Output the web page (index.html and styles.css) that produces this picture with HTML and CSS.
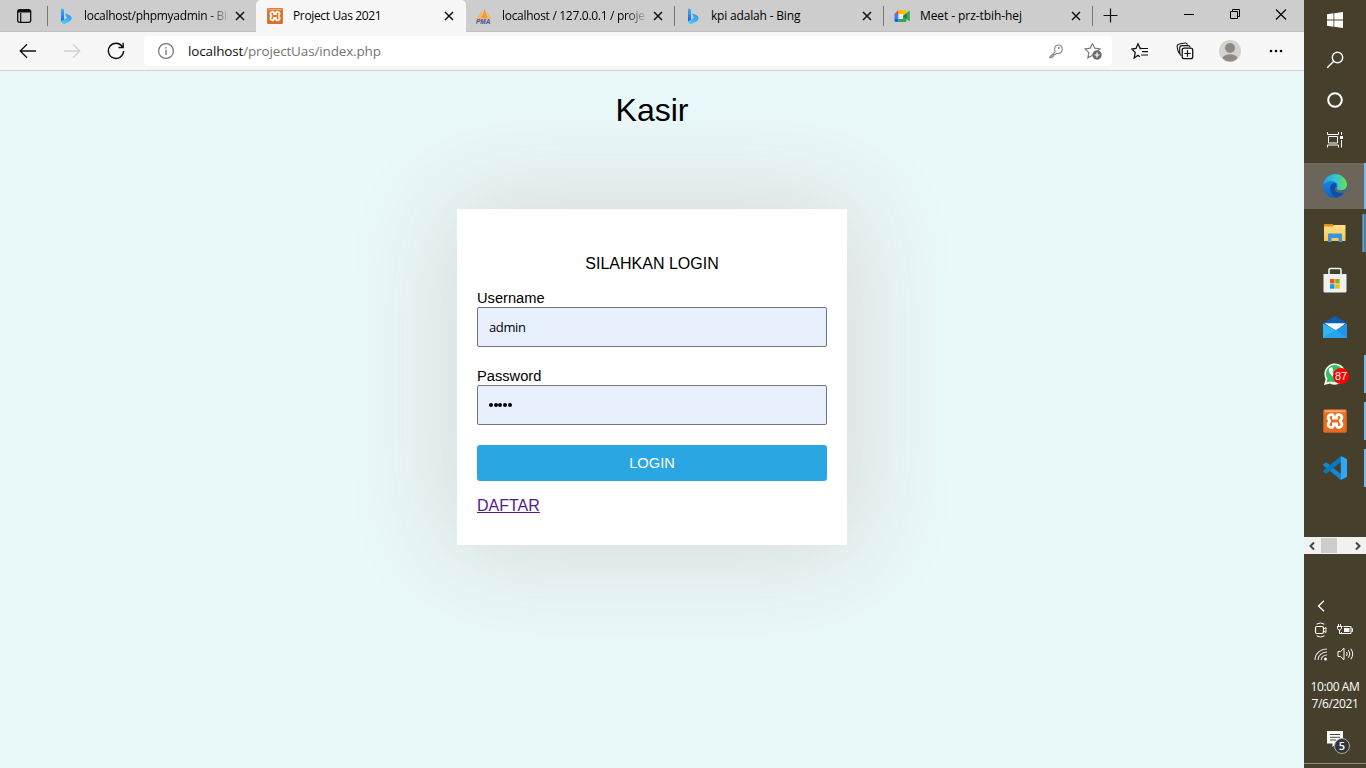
FILE: index.html
```html
<!DOCTYPE html>
<html lang="id">
<head>
<meta charset="utf-8">
<title>Project Uas 2021</title>
<link rel="stylesheet" href="styles.css">
</head>
<body>
<svg class="defs" width="0" height="0">
  <defs>
    <linearGradient id="bg1" x1="0" y1="0" x2="0" y2="1"><stop offset="0" stop-color="#3fb4f5"/><stop offset="1" stop-color="#2558e8"/></linearGradient>
    <linearGradient id="bg2" x1="1" y1="0" x2="0" y2="1"><stop offset="0" stop-color="#2f8af0"/><stop offset="1" stop-color="#45dff5"/></linearGradient>
    <linearGradient id="eg1" x1="0" y1="0" x2="1" y2="0"><stop offset="0" stop-color="#2a9be0"/><stop offset=".5" stop-color="#35c3d3"/><stop offset="1" stop-color="#6be04b"/></linearGradient>
    <linearGradient id="eg2" x1="0" y1="0" x2="0" y2="1"><stop offset="0" stop-color="#1f93e0"/><stop offset="1" stop-color="#0c64c8"/></linearGradient>
    <linearGradient id="fg" x1="0" y1="0" x2="0" y2="1"><stop offset="0" stop-color="#ffe189"/><stop offset="1" stop-color="#f8c84a"/></linearGradient>
    <linearGradient id="og" x1="0" y1="0" x2="0" y2="1"><stop offset="0" stop-color="#ee8a45"/><stop offset=".25" stop-color="#e96d1c"/><stop offset="1" stop-color="#e66c1e"/></linearGradient>
    <symbol id="close" viewBox="0 0 10 10"><path d="M1 1l8 8M9 1l-8 8" stroke="#111" stroke-width="1.5" fill="none"/></symbol>
    <symbol id="bing" viewBox="0 0 16 16"><path d="M3 .3l3 1.100v11L3 14z" fill="url(#bg1)"/><path d="M7.300 5.200l4.400 2.100c2.800 1.700 2.200 5-.4 6.300L6.300 16C4.500 16 3 15 3 13.200l6.200-3.500-1-.7z" fill="url(#bg2)"/></symbol>
    <symbol id="xampp" viewBox="0 0 24 24"><rect x=".5" y=".5" width="23" height="23" rx="1.500" fill="url(#og)" stroke="#b85d25"/><path d="M2 2.200h20" stroke="#f8ab75" stroke-width="1.500"/><path d="M6.800 6c2-1 3.700 0 3.700 1.700v1.500h3V7.700c0-1.700 1.700-2.700 3.700-1.700 2.100 1 2.200 3.300.8 4.600-.8.800-.8 2 0 2.800 1.400 1.300 1.300 3.600-.8 4.600-2 1-3.700 0-3.700-1.700v-1.500h-3v1.500c0 1.700-1.700 2.700-3.700 1.700-2.100-1-2.200-3.300-.8-4.600.8-.8.800-2 0-2.800C4.600 9.300 4.700 7 6.800 6z" fill="none" stroke="#fff" stroke-width="2.800"/></symbol>
  </defs>
</svg>
<div class="screen">
  <div class="browser">
    <div class="tabstrip">
      <div class="tab-menu"><svg width="16" height="16" viewBox="0 0 16 16"><rect x="1.700" y="1.700" width="13" height="12.600" rx="2" fill="none" stroke="#111" stroke-width="1.300"/><path d="M2 3.200h12.500" stroke="#111" stroke-width="2.600"/><path d="M4.700 5v9" stroke="#111" stroke-width="1.200"/></svg></div>
      <div class="tab first"><svg class="fav"><use href="#bing"/></svg><span class="label t1">localhost/phpmyadmin - Bi</span><svg class="x"><use href="#close"/></svg></div>
      <div class="tab active"><svg class="fav"><use href="#xampp"/></svg><span class="label t2">Project Uas 2021</span><svg class="x"><use href="#close"/></svg></div>
      <div class="tab"><svg class="fav" viewBox="0 0 16 16"><path d="M.5 10.500L6 2.500v8z" fill="#f7b65f"/><path d="M5.500 10.500L8.500.5l3.300 10z" fill="#f79a2c"/><path d="M11 3.500l4.500 7h-3.500z" fill="#f9b55c"/><text class="pma" x="0" y="15.500">PMA</text></svg><span class="label t3">localhost / 127.0.0.1 / proje</span><svg class="x"><use href="#close"/></svg></div>
      <div class="tab sep"><svg class="fav"><use href="#bing"/></svg><span class="label t4">kpi adalah - Bing</span><svg class="x"><use href="#close"/></svg></div>
      <div class="tab sep"><svg class="fav" viewBox="0 0 16 16"><path d="M.5 6L4.500 2v4z" fill="#ea4335"/><path d="M4.500 2H11q1.500 0 1.500 1.500V8L9 6H4.500z" fill="#fbbc04"/><path d="M.5 6h4v5h-4z" fill="#3f7ff0"/><path d="M.5 11h4v3H2Q.5 14 .5 12.500z" fill="#1967d2"/><path d="M4.500 11H9V8l6-5q.8-.4.8.5v9q0 .9-.8.5l-2.500-2v1.500q0 1.500-1.500 1.500H4.500z" fill="#34a853"/><path d="M9 8l3.500-2.500V11z" fill="#188038"/><path d="M4.500 6H9v5H4.500z" fill="#e8eeee"/></svg><span class="label t5">Meet - prz-tbih-hej</span><svg class="x"><use href="#close"/></svg></div>
      <div class="newtab sep"><svg width="15" height="15" viewBox="0 0 15 15"><path d="M7.500 .5v14M.5 7.500h14" stroke="#111" stroke-width="1.200"/></svg></div>
      <div class="winbtns">
        <svg width="46" height="28" viewBox="0 0 46 28"><path d="M18 14.500h10" stroke="#000"/></svg>
        <svg width="46" height="28" viewBox="0 0 46 28"><path d="M18.500 11.500h7v7h-7zM20.500 11v-1.500h7v7H26" fill="none" stroke="#000"/></svg>
        <svg width="46" height="28" viewBox="0 0 46 28"><path d="M18 9.500l10 10M28 9.500l-10 10" stroke="#000" stroke-width="1.100"/></svg>
      </div>
    </div>
    <div class="toolbar">
      <div class="nav"><svg width="18" height="16" viewBox="0 0 18 16"><path d="M17 8H1.500M8 1.200L1.200 8 8 14.800" fill="none" stroke="#111" stroke-width="1.300"/></svg></div>
      <div class="nav"><svg width="18" height="16" viewBox="0 0 18 16"><path d="M1 8h15.500M10 1.200L16.800 8 10 14.800" fill="none" stroke="#d2d2d2" stroke-width="1.300"/></svg></div>
      <div class="nav"><svg width="18" height="18" viewBox="0 0 18 18"><path d="M15.400 4.700A7.600 7.600 0 1 0 16.600 9M16.200.8v4.700h-4.700" fill="none" stroke="#111" stroke-width="1.400"/></svg></div>
      <div class="address">
        <svg class="info" width="18" height="18" viewBox="0 0 18 18"><circle cx="9" cy="9" r="7.400" fill="none" stroke="#757575" stroke-width="1.200"/><path d="M9 7.800V13M9 5v1.500" stroke="#757575" stroke-width="1.300"/></svg>
        <div class="url"><b>localhost</b>/projectUas/index.php</div>
        <svg class="key" width="16" height="16" viewBox="0 0 16 16"><path d="M7 8.800L1.800 14v.7h2.400v-1.500h1.400v-1.500h1.500l1.400-1.400c3 .8 5.700-1 5.700-4 0-2.500-1.800-4.300-4.100-4.300-3 0-4.200 2.800-3.100 6.800z" fill="none" stroke="#8a8a8a" stroke-width="1.200"/><circle cx="10.800" cy="5" r="1" fill="#8a8a8a"/></svg>
        <svg class="star" width="19" height="18" viewBox="0 0 19 18"><path d="M8.500 1.500l2.300 4.700 5.200.7-3.800 3.600M8.500 13.200l-4.600 2.600.9-5.200L1 6.900l5.200-.7 2.300-4.700" fill="none" stroke="#777" stroke-width="1.200"/><circle cx="13" cy="13" r="4.700" fill="#6b6b6b"/><path d="M13 10.500v5M10.500 13h5" stroke="#fff" stroke-width="1.200"/></svg>
      </div>
      <div class="tool"><svg width="18" height="18" viewBox="0 0 18 18"><path d="M10.600 6.500H9.200L7 1.800 5 6.500.9 7.100l3.300 3.400L3.200 16 7 13.300l1.800 1.500" fill="none" stroke="#111" stroke-width="1.300"/><path d="M10 6.500h7M11 9.700h6M10 13h7" stroke="#111" stroke-width="1.200"/></svg></div>
      <div class="tool"><svg width="18" height="18" viewBox="0 0 18 18"><path d="M4.300 12L3 10.800C1.800 9.200 1 5 1.200 3.700 1.300 2.500 2.500 2.200 3.500 2L9 1c1.300-.2 2.200.5 2.300 1.700M5.300 13.500c-1.500-.5-1.600-1.500-1.600-3V6c0-1.600.7-2.400 2.300-2.400h6c1.200 0 1.900.6 2.200 1.600" fill="none" stroke="#111" stroke-width="1.100"/><rect x="6.200" y="6.200" width="10.500" height="10.500" rx="2" fill="#f7f7f7" stroke="#111" stroke-width="1.300"/><path d="M11.500 8.300v6.400M8.300 11.500h6.400" stroke="#111" stroke-width="1.200"/></svg></div>
      <div class="tool"><svg width="22" height="22" viewBox="0 0 22 22"><circle cx="11" cy="11" r="11" fill="#d4d1ce"/><circle cx="11" cy="8" r="5" fill="#8d8985"/><path d="M3.500 18c2-5 13-5 15 0-3.800 4.700-11.200 4.700-15 0z" fill="#8d8985"/></svg></div>
      <div class="tool"><svg width="16" height="4" viewBox="0 0 16 4"><circle cx="3" cy="2" r="1.300"/><circle cx="8" cy="2" r="1.300"/><circle cx="13" cy="2" r="1.300"/></svg></div>
    </div>
    <main class="page">
      <h1>Kasir</h1>
      <form class="card">
        <p class="heading">SILAHKAN LOGIN</p>
        <label>Username</label>
        <div class="field">admin</div>
        <label>Password</label>
        <div class="field"><i></i><i></i><i></i><i></i><i></i></div>
        <div class="login">LOGIN</div>
        <a href="#">DAFTAR</a>
      </form>
    </main>
  </div>
  <aside class="taskbar">
    <div class="sys"><svg width="16" height="16" viewBox="0 0 16 16"><path d="M0 2.200L6.500 1.300v6.200H0zM7.300 1.200L16 0v7.500H7.300zM0 8.400h6.500v6.300L0 13.800zM7.300 8.400H16V16l-8.700-1.200z" fill="#fff"/></svg></div>
    <div class="sys"><svg width="18" height="18" viewBox="0 0 18 18"><circle cx="11.500" cy="6.500" r="5.200" fill="none" stroke="#fff" stroke-width="1.400"/><path d="M7.700 10.300L1.200 16.800" stroke="#fff" stroke-width="1.500"/></svg></div>
    <div class="sys"><svg width="16" height="16" viewBox="0 0 16 16"><circle cx="8" cy="8" r="6.800" fill="none" stroke="#fff" stroke-width="2"/></svg></div>
    <div class="sys last"><svg width="16" height="16" viewBox="0 0 16 16"><path d="M.5 0v2.500h11V0M.5 15.500V13h11v2.500M1.500 4.500h9v6.500h-9zM14.500 0v3M14.500 8v7.500" fill="none" stroke="#fff"/><rect x="13" y="4" width="3" height="3" fill="#fff"/></svg></div>
    <div class="app current"><svg width="24" height="24" viewBox="0 0 24 24"><circle cx="12" cy="12" r="12" fill="url(#eg2)"/><path d="M1.200 7C4 1.500 9.500-.7 15 .5c5.500 1.200 9 6 9 10.300 0 3.700-3 5.700-6.200 5.500-2.800-.2-4.700-1-3.700-2.700 1.200-2 .5-4.300-2-5.500C8.500 6 3.500 7.500.4 10.500z" fill="url(#eg1)"/><path d="M7.200 14c0-3 2-5 4.500-5 1.500 1 1.700 2.700.8 4-.8 1.500 1 4 5.300 3.800 2.300-.1 3.500-.6 4.500-1.200-2 5-5.500 7.400-9.300 7.800C10 22 7.200 18.500 7.200 14z" fill="#144ca0"/><path d="M12.800 12.500c-.8 1.200-.4 2.600 1.500 3.600 2.200 1.200 5.500 1.200 8.700-.4l1.500 1-1.700 2.300-1.500-.8c-3.500 1.300-7.500.5-8.800-1.500-1-1.700-.8-3.300.3-4.200z" fill="#6b6659"/></svg></div>
    <div class="app open stacked"><svg width="22" height="20" viewBox="0 0 22 20"><path d="M0 1h9l1 2-1 3H0z" fill="#d99213"/><path d="M0 3.500h8.500L10 2h11.500v16H0z" fill="url(#fg)"/><path d="M4 19v-7.500q0-1 1-1h12q1 0 1 1V19h-3.500v-4h-7v4z" fill="#3b91dc"/></svg></div>
    <div class="app"><svg width="24" height="26" viewBox="0 0 24 26"><path d="M6 8V3q0-1.500 1.500-1.500h9q1.500 0 1.500 1.500v5" fill="none" stroke="#f1f1f1" stroke-width="1.600"/><path d="M.5 7h23v17q0 1.500-1.500 1.500H2Q.5 25.500.5 24z" fill="#f1f1f1"/><path d="M7 12h4.500v4.500H7z" fill="#f25022"/><path d="M12.200 12h4.500v4.500h-4.500z" fill="#7fba00"/><path d="M7 17.200h4.500v4.500H7z" fill="#00a4ef"/><path d="M12.200 17.200h4.500v4.500h-4.500z" fill="#ffb900"/></svg></div>
    <div class="app"><svg width="24" height="24" viewBox="0 0 24 24"><path d="M0 8L12 1l12 7v5H0z" fill="#0d5db1"/><path d="M2 8.500h20L13 15.500z" fill="#fff"/><path d="M0 8.500L13 15l11-6.500V23H0z" fill="#30b5f1"/><path d="M0 23L24 8.500V23z" fill="#2196e3"/><path d="M2 8.500h20L13 14.800z" fill="#f6fafc"/><path d="M13 14.800L24 23H0z" fill="#26a5ec"/></svg></div>
    <div class="app open"><svg width="26" height="26" viewBox="0 0 26 26"><path d="M2 24l1.600-6A10.600 10.600 0 1 1 8 22.400z" fill="#f7f7f7"/><path d="M4.500 21.500l1-4A8.700 8.700 0 1 1 9 20.500z" fill="#31c15a"/><path d="M8.500 6.500l1.700-.3 1.200 3-1 1.500c.8 1.700 2.400 2.900 4 3.600l1.500-1.500 2.800 1.500c0 2.500-2.200 3.400-4 2.900-4.300-1-7.500-4.800-8-7.900 0-1.100.7-2.100 1.800-2.800z" fill="#fff"/></svg><span class="badge">87</span></div>
    <div class="app open"><svg width="24" height="24"><use href="#xampp"/></svg></div>
    <div class="app open"><svg width="24" height="24" viewBox="0 0 24 24"><path d="M0 8.500l2-1.800q1-.6 2 0L18 18v6L.3 9.500z" fill="#1687ce"/><path d="M0 15.500l2 1.800q1 .6 2 0L18 6V0L.3 14.500z" fill="#0879bd"/><path d="M17.800 0L24 3v18l-6.200 3z" fill="#2ca9f2"/></svg></div>
    <div class="scroll"><svg width="16" height="16" viewBox="0 0 16 16"><path d="M10 4.500L6.500 8l3.500 3.500" fill="none" stroke="#444" stroke-width="2"/></svg><span class="thumb"></span><svg width="16" height="16" viewBox="0 0 16 16"><path d="M6 4.500L9.500 8 6 11.500" fill="none" stroke="#444" stroke-width="2"/></svg></div>
    <div class="tray-more"><svg width="8" height="12" viewBox="0 0 8 12"><path d="M7 .7L1.500 6 7 11.300" fill="none" stroke="#fff" stroke-width="1.300"/></svg></div>
    <div class="tray">
      <svg width="16" height="16" viewBox="0 0 16 16"><path d="M3.500 2.200q4-2.500 8 0M3.500 13.800q4 2.500 8 0" fill="none" stroke="#fff"/><rect x="2.500" y="4.500" width="8" height="7" rx="1.500" fill="none" stroke="#fff" stroke-width="1.200"/><path d="M10.500 7l2.500-1.500v5L10.500 9" fill="none" stroke="#fff"/></svg>
      <svg width="16" height="16" viewBox="0 0 16 16"><path d="M6.500 4.500H14v7H4.500V10M14.500 6.500h1v3h-1" fill="none" stroke="#fff"/><rect x="7" y="6" width="5.500" height="4" fill="#fff"/><path d="M1.500 2v2M3.500 2v2M0 4.500h5.500M.5 5v1.500l1.200 1.500h1.600l1.200-1.500V5M2.500 8v3.500H5" fill="none" stroke="#fff"/></svg>
    </div>
    <div class="tray">
      <svg width="16" height="16" viewBox="0 0 16 16"><path d="M2 14C2 8 7 3 14 3M5 14c0-4.500 4-8 9-8M8.200 14c0-3 2.500-5 5.800-5" fill="none" stroke="#ddd" stroke-width="1.100"/><circle cx="12.500" cy="13" r="1.500" fill="#fff"/></svg>
      <svg width="18" height="16" viewBox="0 0 18 16"><path d="M1 5.500h2.500L7 2.200v11.600L3.500 10.500H1z" fill="none" stroke="#fff"/><path d="M9.500 6q1.300 2 0 4M11.500 4.200q2.600 3.800 0 7.600M13.800 2.700q3.800 5.300 0 10.600" fill="none" stroke="#fff"/></svg>
    </div>
    <div class="clock"><span class="time">10:00 AM</span><span class="date">7/6/2021</span></div>
    <div class="notice"><svg width="16" height="17" viewBox="0 0 16 17"><path d="M0 0h16v12.500H9.500L5.500 16v-3.500H0z" fill="#fff"/><path d="M3 3.500h10M3 6.300h10M3 9h6" stroke="#453f2c"/></svg><span class="count">5</span></div>
  </aside>
</div>
</body>
</html>
```
FILE: styles.css
```css
* { box-sizing: border-box; }
body { margin: 0; overflow: hidden; font-family: "Open Sans", "Noto Sans", sans-serif; color: #000; }
svg { display: block; flex: none; }
.defs { position: absolute; }
.screen { display: flex; width: 1366px; height: 768px; }
.browser { width: 1304px; display: flex; flex-direction: column; }

.tabstrip { display: flex; height: 32px; background: #cdcdcd; border-bottom: 1px solid #c0c0c0; }
.tab-menu { width: 48px; padding: 8px 0 0 16px; background: linear-gradient(#777, #777) right 6px / 1px 20px no-repeat; }
.tab { width: 209px; height: 31px; display: flex; align-items: center; padding: 0 11px; font-size: 12px; }
.tab.first { width: 208px; padding-left: 10px; }
.tab.active { width: 210px; height: 32px; padding: 0 12px 1px 11px; background: #f7f7f7; border-radius: 5px 5px 0 0; }
.active + .tab { width: 208px; padding-left: 10px; }
.sep { background: linear-gradient(#777, #777) left 6px / 1px 20px no-repeat; }
.fav { width: 16px; height: 16px; margin-right: 10px; }
.label { flex: 1; min-width: 0; white-space: nowrap; line-height: 20px; }
.t1, .t3 { -webkit-mask-image: linear-gradient(90deg, #000 124px, transparent 146px); mask-image: linear-gradient(90deg, #000 124px, transparent 146px); }
.t1 { letter-spacing: -.3px; }
.t2 { letter-spacing: -.35px; }
.t3 { letter-spacing: -.3px; }
.t4 { letter-spacing: -.18px; }
.t5 { letter-spacing: -.08px; }
.x { width: 10px; height: 10px; }
.pma { font: italic bold 6.500px "Liberation Sans", sans-serif; fill: #4b4c80; }
.newtab { width: 40px; padding: 8px 0 0 11px; }
.winbtns { display: flex; margin-left: auto; }

.toolbar { display: flex; align-items: center; height: 39px; background: #f7f7f7; border-bottom: 1px solid #d0d3d4; padding-left: 6px; }
.nav { width: 44px; display: flex; justify-content: center; }
.address { width: 968px; height: 30px; margin: 0 5px 0 6px; padding: 0 9px 0 13px; display: flex; align-items: center; background: #fff; border-radius: 4px; }
.url { margin-left: 13px; flex: 1; font-size: 13.5px; letter-spacing: -.15px; color: #757575; line-height: 20px; }
.url b { font-weight: 400; color: #111; }
.key { margin-right: 20px; }
.tool { width: 45.300px; display: flex; justify-content: center; }

.page { flex: 1; background: #e9f8f9; overflow: hidden; font-family: "Liberation Sans", Arial, sans-serif; }
.page h1 { margin: 21px 0 0; font-size: 32px; line-height: 37px; font-weight: 400; text-align: center; }
.card { width: 390px; height: 336px; margin: 80px auto 0; padding: 46px 20px 0; background: #fff; box-shadow: 0 0 100px 4px #d6d6d6; }
.heading { margin: 0 0 16px; font-size: 16px; line-height: 18px; text-align: center; }
.card label { display: block; font-size: 14.667px; line-height: 18px; }
.field { height: 40px; margin-bottom: 20px; padding: 0 11px; display: flex; align-items: center; background: #e8f0fe; border: 1px solid #767676; border-radius: 2px; font: 13px/18px "Open Sans", sans-serif; letter-spacing: -.4px; }
.field i { width: 4px; height: 4px; margin-right: .7px; border-radius: 50%; background: #000; }
.login { height: 36px; margin-bottom: 16px; border-radius: 3px; background: #2aa7e2; color: #fff; font-size: 14.667px; line-height: 36px; text-align: center; }
.card a { display: block; font-size: 16px; line-height: 18px; color: #551a8b; }

.taskbar { width: 62px; display: flex; flex-direction: column; background: #453f2c; color: #fff; }
.sys { height: 40px; display: flex; align-items: center; justify-content: center; }
.last { margin-bottom: 3px; }
.app { position: relative; height: 46px; margin-bottom: 1px; display: flex; align-items: center; justify-content: center; }
.current { background: #6b6659; border-right: 2px solid #76b9ed; padding-left: 2px; }
.open { background: linear-gradient(#76b9ed, #76b9ed) right 4px / 2px 38px no-repeat; }
.stacked { background: linear-gradient(90deg, #527ea3 0 1px, #6a9fc9 1px 2px, #527ea3 2px) right 4px / 4px 38px no-repeat; }
.badge { position: absolute; left: 29px; top: 17px; width: 16px; height: 16px; border-radius: 50%; background: #f00; font: 11px/16px "Liberation Sans", sans-serif; text-align: center; }
.scroll { display: flex; align-items: center; height: 17px; margin-top: 45px; background: #f1f1f1; }
.thumb { width: 17px; height: 15px; margin: 0 13px 0 1px; background: #cdcdcd; }
.tray-more { height: 12px; margin: 46px 0 10px 13px; }
.tray { display: flex; gap: 8px; height: 16px; margin: 0 0 8px 9px; }
.clock { display: flex; flex-direction: column; align-items: center; margin-top: 8px; font-size: 12px; line-height: 17px; letter-spacing: -.4px; white-space: nowrap; }
.notice { position: relative; margin-top: 19px; padding-left: 23px; height: 33px; border-bottom: 1px solid #8f8b80; }
.count { position: absolute; left: 30px; top: 7px; width: 16px; height: 16px; border: 1px solid #aaa; border-radius: 50%; background: #33333a; font-size: 11px; font-weight: 600; line-height: 14px; text-align: center; }
```
